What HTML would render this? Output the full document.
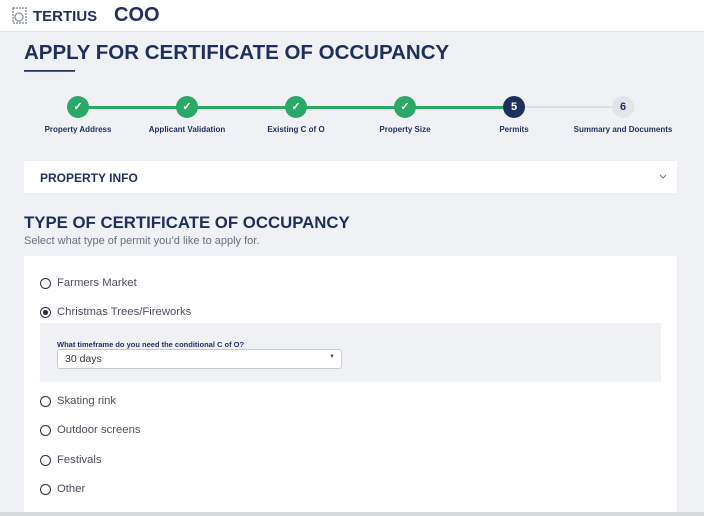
<!DOCTYPE html>
<html><head><style>
*{margin:0;padding:0;box-sizing:border-box}
body{width:704px;height:516px;overflow:hidden;background:#f0f1f4;font-family:"Liberation Sans",sans-serif;color:#1e2f5e;position:relative}
.hdr{position:absolute;left:0;top:0;width:704px;height:32px;background:#fff;border-bottom:1px solid #e3e5ea}
.abs{position:absolute}
.title{left:24px;top:41px;font-size:20.5px;font-weight:bold;letter-spacing:0}
.step{position:absolute;top:96px;width:22px;height:22px;border-radius:50%;background:#2aa866;color:#fff;font-size:11px;font-weight:bold;text-align:center;line-height:22px}
.lbl{position:absolute;top:125px;font-size:8px;font-weight:bold;width:140px;text-align:center}
.radio{position:absolute;left:40px;width:11px;height:11px;border:1.3px solid #2b2f3a;border-radius:50%}
.rl{position:absolute;left:57px;font-size:11.3px;color:#4a4f5c}
</style></head><body>
<div class="hdr"></div>
<svg class="abs" style="left:10px;top:6px" width="20" height="20" viewBox="0 0 20 20"><rect x="3" y="2" width="13" height="15" fill="none" stroke="#8a93a8" stroke-width="1.5" stroke-dasharray="2 1"/><circle cx="9" cy="11" r="4" fill="none" stroke="#8a93a8" stroke-width="1.3"/></svg>
<div class="abs" style="left:33px;top:8px;font-size:15px;font-weight:bold">TERTIUS</div>
<div class="abs" style="left:114px;top:4px;font-size:20px;font-weight:bold">COO</div>
<div class="abs title">APPLY FOR CERTIFICATE OF OCCUPANCY</div>
<div class="abs" style="left:24px;top:70px;width:51px;height:2px;background:#2a3560;border-bottom:1px solid #b03a48"></div>
<div class="abs" style="left:78px;top:106px;width:436px;height:3px;background:#2aa866"></div>
<div class="abs" style="left:514px;top:106px;width:109px;height:2px;background:#dcdee3"></div>
<div class="step" style="left:67px">✓</div>
<div class="step" style="left:176px">✓</div>
<div class="step" style="left:285px">✓</div>
<div class="step" style="left:394px">✓</div>
<div class="step" style="left:503px;background:#1e2f5e">5</div>
<div class="step" style="left:612px;background:#e3e4e8;color:#1e2f5e">6</div>
<div class="lbl" style="left:8px">Property Address</div>
<div class="lbl" style="left:117px">Applicant Validation</div>
<div class="lbl" style="left:226px">Existing C of O</div>
<div class="lbl" style="left:335px">Property Size</div>
<div class="lbl" style="left:444px">Permits</div>
<div class="lbl" style="left:553px">Summary and Documents</div>
<div class="abs" style="left:24px;top:161px;width:653px;height:32px;background:#fff"></div>
<div class="abs" style="left:40px;top:171px;font-size:12px;font-weight:bold">PROPERTY INFO</div>
<svg class="abs" style="left:659px;top:174px" width="8" height="5" viewBox="0 0 8 5"><path d="M1 1 L4 4 L7 1" fill="none" stroke="#777" stroke-width="1"/></svg>
<div class="abs" style="left:24px;top:213px;font-size:16.8px;font-weight:bold">TYPE OF CERTIFICATE OF OCCUPANCY</div>
<div class="abs" style="left:24px;top:235px;font-size:11px;color:#6a6f7c">Select what type of permit you’d like to apply for.</div>
<div class="abs" style="left:24px;top:256px;width:653px;height:260px;background:#fff"></div>
<div class="radio" style="top:278px"></div><div class="rl" style="top:277px">Farmers Market</div>
<div class="radio" style="top:307px"><div style="position:absolute;left:2px;top:2px;width:4.5px;height:4.5px;border-radius:50%;background:#2b2f3a"></div></div><div class="rl" style="top:306px">Christmas Trees/Fireworks</div>
<div class="abs" style="left:40px;top:323px;width:621px;height:59px;background:#f0f1f4"></div>
<div class="abs" style="left:57px;top:340px;font-size:7.5px;font-weight:bold">What timeframe do you need the conditional C of O?</div>
<div class="abs" style="left:57px;top:349px;width:285px;height:20px;background:#fff;border:1px solid #c8cbd2;border-radius:3px"></div>
<div class="abs" style="left:65px;top:353px;font-size:10.5px;color:#333">30 days</div>
<div class="abs" style="left:329px;top:354px;font-size:6px;color:#555">▼</div>
<div class="radio" style="top:396px"></div><div class="rl" style="top:395px">Skating rink</div>
<div class="radio" style="top:425px"></div><div class="rl" style="top:424px">Outdoor screens</div>
<div class="radio" style="top:455px"></div><div class="rl" style="top:454px">Festivals</div>
<div class="radio" style="top:484px"></div><div class="rl" style="top:483px">Other</div>
<div class="abs" style="left:0;top:512px;width:704px;height:4px;background:#d8dade"></div>
</body></html>
